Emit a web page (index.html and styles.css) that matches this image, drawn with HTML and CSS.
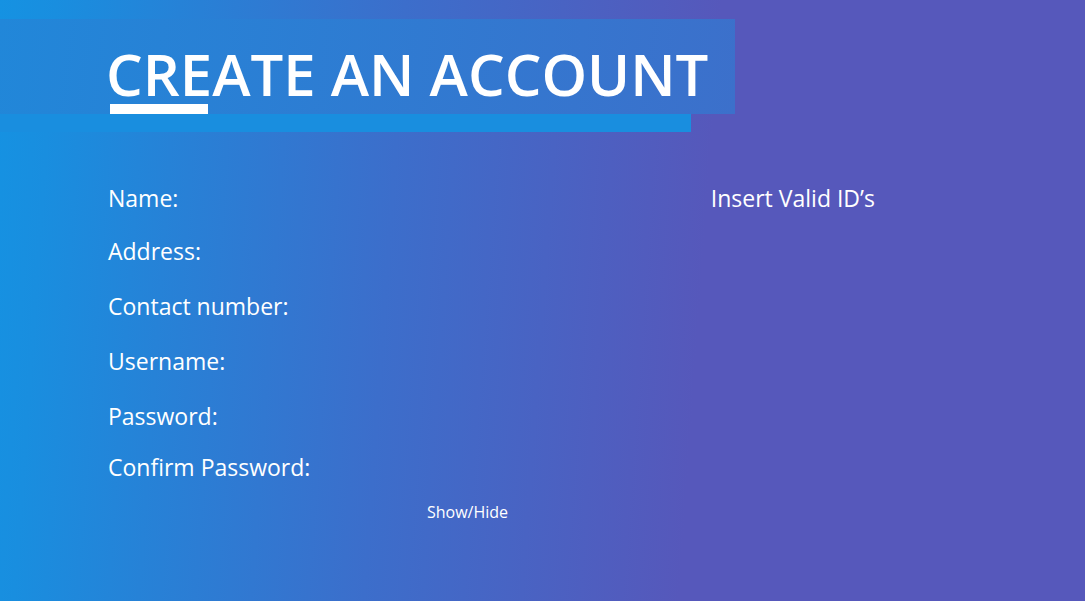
FILE: index.html
```html
<!DOCTYPE html>
<html lang="en">
<head>
<meta charset="utf-8">
<meta name="viewport" content="width=device-width, initial-scale=1">
<title>Create an account</title>
<link rel="stylesheet" href="styles.css">
</head>
<body>
<header class="banner">
  <div class="banner-main"><h1 class="title">CREATE AN ACCOUNT</h1></div>
  <div class="banner-strip"></div>
</header>
<form class="form">
  <div class="fields">
    <div class="field"><label for="name">Name:</label><input id="name" type="text"></div>
    <div class="field"><label for="address">Address:</label><input id="address" type="text"></div>
    <div class="field"><label for="contact">Contact number:</label><input id="contact" type="tel"></div>
    <div class="field"><label for="username">Username:</label><input id="username" type="text"></div>
    <div class="field"><label for="password">Password:</label><input id="password" type="password"></div>
    <div class="field"><label for="confirm">Confirm Password:</label><input id="confirm" type="password"></div>
    <button class="toggle" type="button">Show/Hide</button>
  </div>
  <h2 class="ids">Insert Valid ID’s</h2>
</form>
</body>
</html>
```
FILE: styles.css
```css
* { box-sizing: border-box; }
body {
  margin: 0;
  min-height: 100vh;
  padding-top: 19px;
  color: #fff;
  font-family: "Segoe UI", "Open Sans", "Noto Sans", sans-serif;
  background: linear-gradient(94deg, #1592e2 0%, #198edf 5%, #2682d7 16%, #3c6ecb 36%, #5658bb 64%, #5658bb 100%);
}
.banner-main {
  width: 67.7%;
  padding: 20px 0 5px 106px;
  background: linear-gradient(97deg, #2187d9, #3c70cb);
}
.title {
  position: relative;
  margin: 0;
  font-size: 58px;
  line-height: 70px;
  font-weight: 600;
  white-space: nowrap;
}
.title::after {
  content: "";
  position: absolute;
  left: 4px;
  bottom: -5px;
  width: 98px;
  height: 10px;
  background: #fff;
}
.banner-strip {
  width: 63.7%;
  height: 18px;
  background: #198edf;
}
.form {
  display: grid;
  grid-template-columns: 61.7% 1fr;
  padding: 49px 0 0 108px;
}
.fields {
  display: grid;
  grid-template-rows: 53px 55px 55px 55px 51px 51px auto;
}
.field {
  display: flex;
  align-items: flex-start;
  gap: 12px;
  font-size: 23px;
  line-height: 34px;
}
.field input {
  flex: 1;
  min-width: 0;
  padding: 0;
  border: 0;
  outline: 0;
  background: transparent;
  color: inherit;
  font: inherit;
}
.toggle {
  justify-self: start;
  margin-left: 319px;
  padding: 0;
  border: 0;
  background: none;
  color: inherit;
  font: inherit;
  font-size: 16px;
  line-height: 22px;
}
.ids {
  margin: 0;
  font-size: 23px;
  line-height: 34px;
  font-weight: 400;
}
```
